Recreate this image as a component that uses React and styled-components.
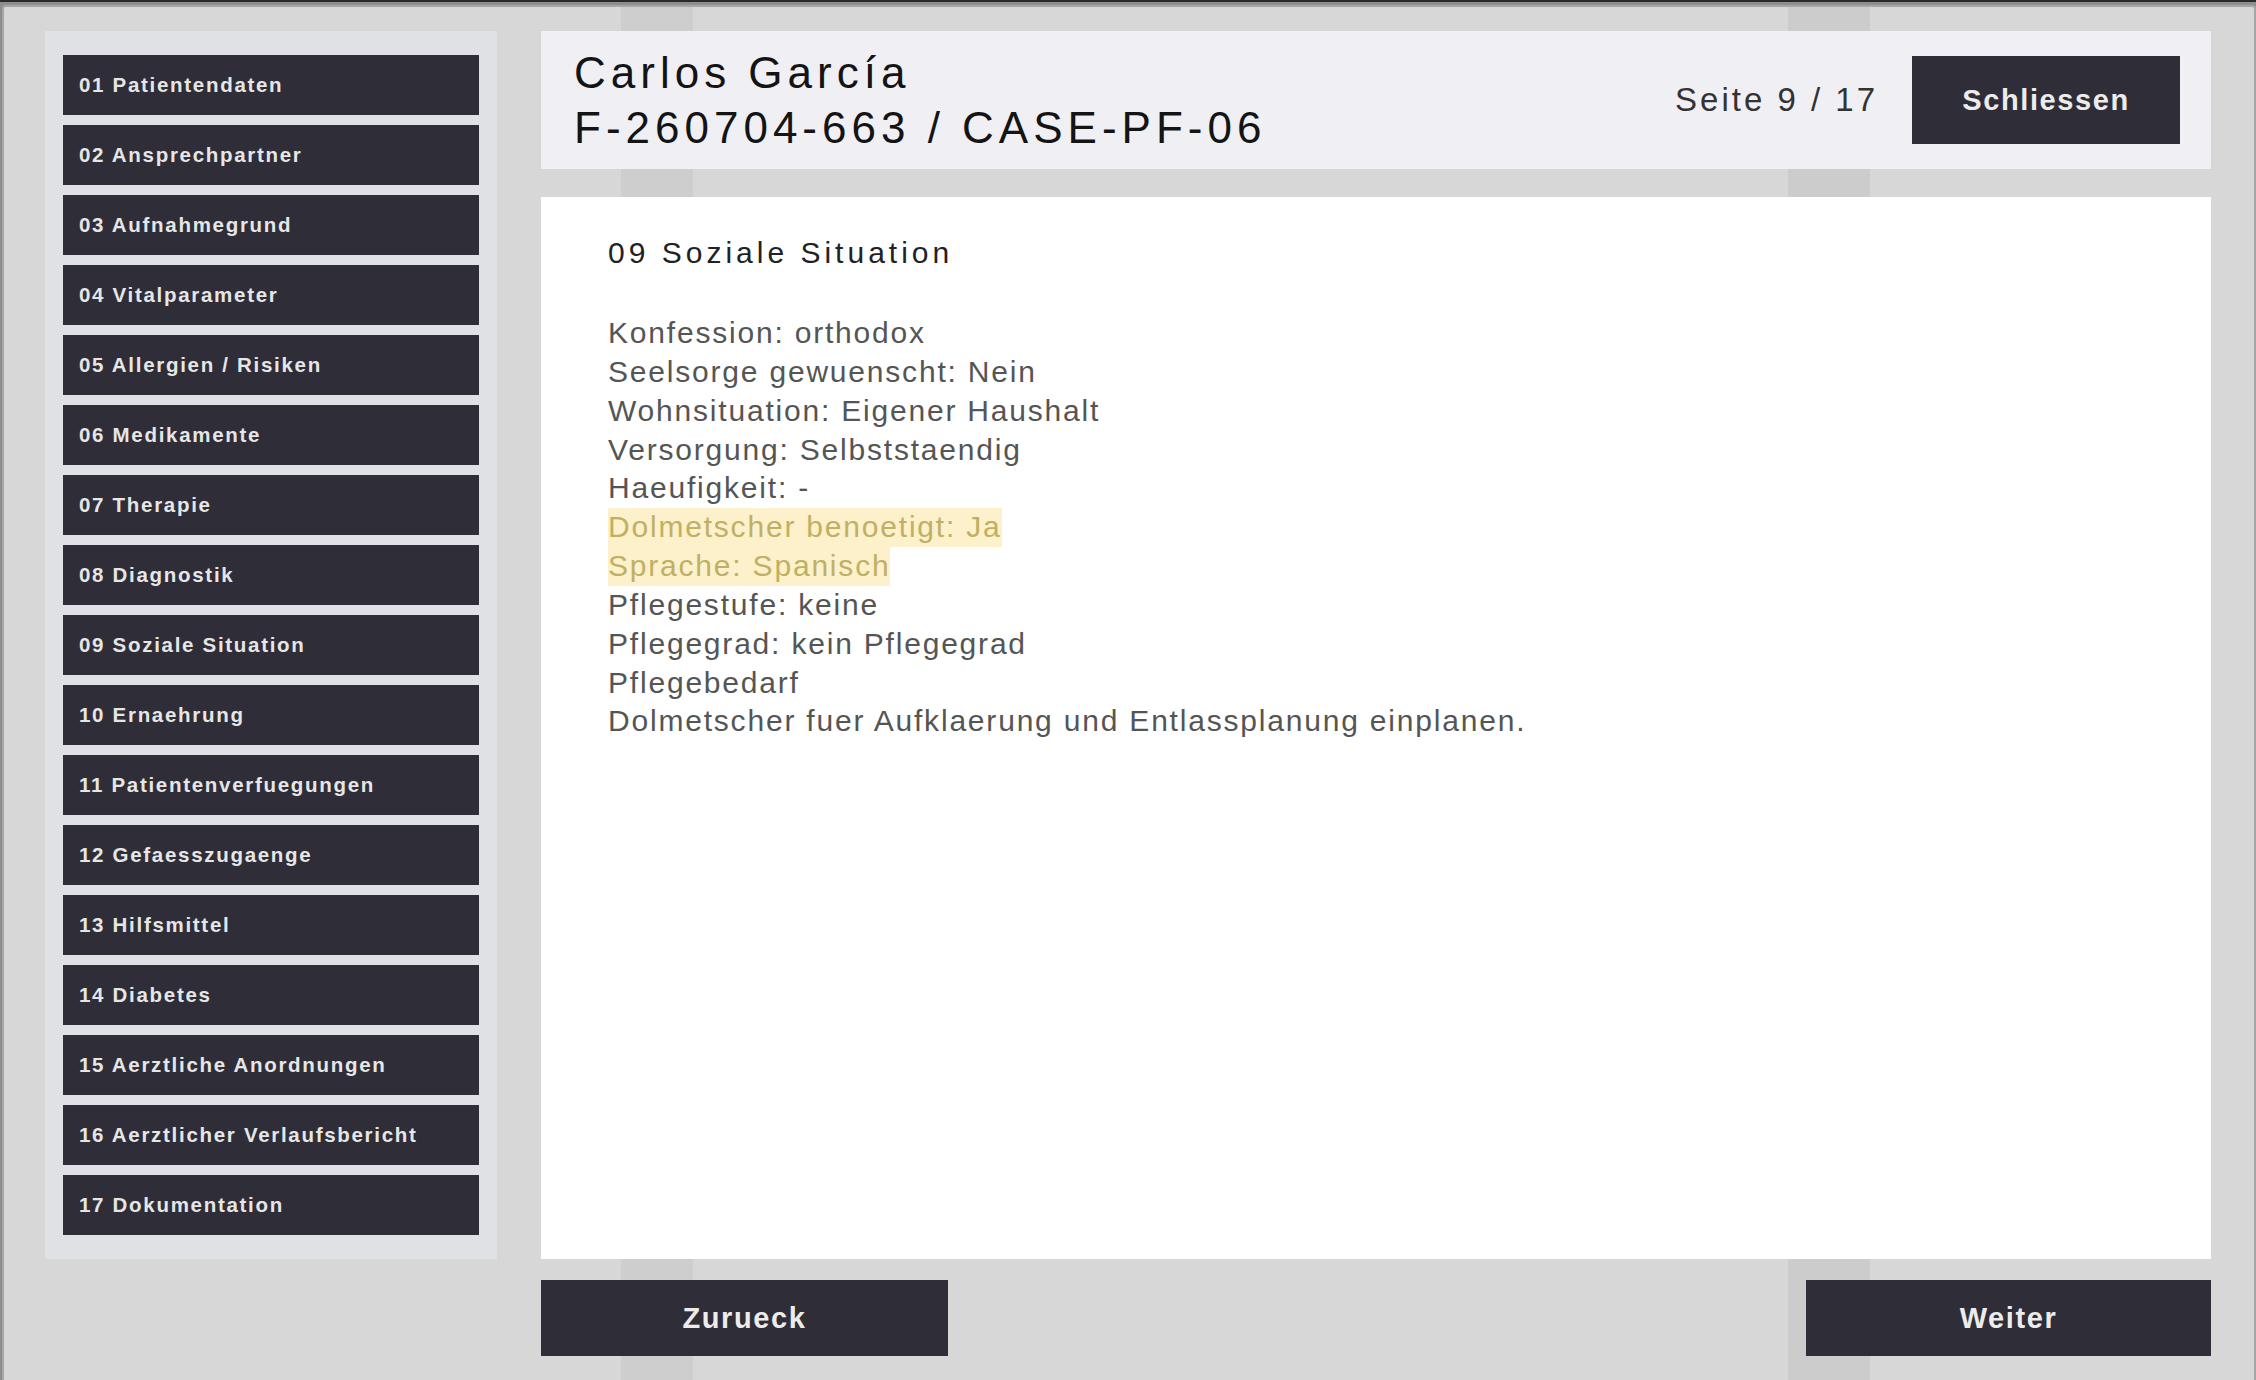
import React from 'react';
import styled, { createGlobalStyle } from 'styled-components';

const Global = createGlobalStyle`
  html, body { margin: 0; padding: 0; }
  body {
    background: linear-gradient(#2a2a2a 0, #2a2a2a 2px, #8e8e8e 2px);
    width: 2256px;
    height: 1380px;
    overflow: hidden;
    font-family: "Liberation Sans", Arial, sans-serif;
  }
  * { box-sizing: border-box; }
`;

const Modal = styled.div`
  margin: 5px 0 0 2px;
  width: 2254px;
  height: 1380px;
  border: 2px solid #a6a6a6;
  border-radius: 4px;
  background:
    linear-gradient(to right,
      transparent 0, transparent 617px,
      rgba(0,0,0,0.045) 617px, rgba(0,0,0,0.045) 689px,
      transparent 689px, transparent 1784px,
      rgba(0,0,0,0.05) 1784px, rgba(0,0,0,0.05) 1866px,
      transparent 1866px),
    #d7d7d7;
  padding: 24px 43px 0 41px;
  display: flex;
  align-items: flex-start;
  gap: 44px;
`;

const Sidebar = styled.nav`
  width: 452px;
  flex: none;
  background: #e0e1e5;
  padding: 24px 18px;
  display: flex;
  flex-direction: column;
  gap: 10px;
`;

const NavButton = styled.button`
  height: 60px;
  width: 100%;
  border: none;
  background: #2f2e38;
  color: #e6e6e6;
  font-family: "Liberation Sans", Arial, sans-serif;
  font-weight: 700;
  font-size: 20.5px;
  letter-spacing: 1.7px;
  text-align: left;
  padding: 0 0 0 16px;
  cursor: pointer;
`;

const Main = styled.div`
  width: 1670px;
  flex: none;
  display: flex;
  flex-direction: column;
`;

const Header = styled.header`
  height: 138px;
  background: #f0f0f4;
  display: flex;
  align-items: center;
  padding: 0 31px 0 33px;
`;

const Identity = styled.div`
  flex: 1;
  font-size: 44px;
  line-height: 55px;
  letter-spacing: 5px;
  color: #141414;
`;

const PageInfo = styled.div`
  font-size: 33px;
  letter-spacing: 3px;
  color: #333333;
  margin-right: 34px;
`;

const DarkButton = styled.button`
  width: ${p => p.$w}px;
  height: ${p => p.$h}px;
  border: none;
  background: #2f2e38;
  color: #ececec;
  font-family: "Liberation Sans", Arial, sans-serif;
  font-weight: 700;
  font-size: 29px;
  letter-spacing: 1.6px;
  cursor: pointer;
  padding: 0;
`;

const Content = styled.section`
  margin-top: 28px;
  height: 1062px;
  background: #ffffff;
  padding: 38px 67px;
`;

const Title = styled.h2`
  margin: 0;
  font-weight: 400;
  font-size: 30px;
  line-height: 36px;
  letter-spacing: 4px;
  color: #222222;
`;

const Body = styled.div`
  margin-top: 43px;
  font-size: 30px;
  line-height: 38.85px;
  letter-spacing: 1.8px;
  color: #555555;
`;

const Line = styled.div`
  width: fit-content;
  background: ${p => (p.$hl ? '#fcf1cb' : 'transparent')};
  color: ${p => (p.$hl ? '#c1b063' : 'inherit')};
`;

const Footer = styled.footer`
  margin-top: 21px;
  display: flex;
  justify-content: space-between;
`;

const sections = [
  '01 Patientendaten',
  '02 Ansprechpartner',
  '03 Aufnahmegrund',
  '04 Vitalparameter',
  '05 Allergien / Risiken',
  '06 Medikamente',
  '07 Therapie',
  '08 Diagnostik',
  '09 Soziale Situation',
  '10 Ernaehrung',
  '11 Patientenverfuegungen',
  '12 Gefaesszugaenge',
  '13 Hilfsmittel',
  '14 Diabetes',
  '15 Aerztliche Anordnungen',
  '16 Aerztlicher Verlaufsbericht',
  '17 Dokumentation',
];

const lines = [
  { t: 'Konfession: orthodox' },
  { t: 'Seelsorge gewuenscht: Nein' },
  { t: 'Wohnsituation: Eigener Haushalt' },
  { t: 'Versorgung: Selbststaendig' },
  { t: 'Haeufigkeit: -' },
  { t: 'Dolmetscher benoetigt: Ja', hl: true },
  { t: 'Sprache: Spanisch', hl: true },
  { t: 'Pflegestufe: keine' },
  { t: 'Pflegegrad: kein Pflegegrad' },
  { t: 'Pflegebedarf' },
  { t: 'Dolmetscher fuer Aufklaerung und Entlassplanung einplanen.' },
];

export default function App() {
  return (
    <>
      <Global />
      <Modal>
        <Sidebar>
          {sections.map(s => (
            <NavButton key={s}>{s}</NavButton>
          ))}
        </Sidebar>
        <Main>
          <Header>
            <Identity>
              <div>Carlos García</div>
              <div>F-260704-663 / CASE-PF-06</div>
            </Identity>
            <PageInfo>Seite 9 / 17</PageInfo>
            <DarkButton $w={268} $h={88}>Schliessen</DarkButton>
          </Header>
          <Content>
            <Title>09 Soziale Situation</Title>
            <Body>
              {lines.map((l, i) => (
                <Line key={i} $hl={l.hl}>{l.t}</Line>
              ))}
            </Body>
          </Content>
          <Footer>
            <DarkButton $w={407} $h={76}>Zurueck</DarkButton>
            <DarkButton $w={405} $h={76}>Weiter</DarkButton>
          </Footer>
        </Main>
      </Modal>
    </>
  );
}
